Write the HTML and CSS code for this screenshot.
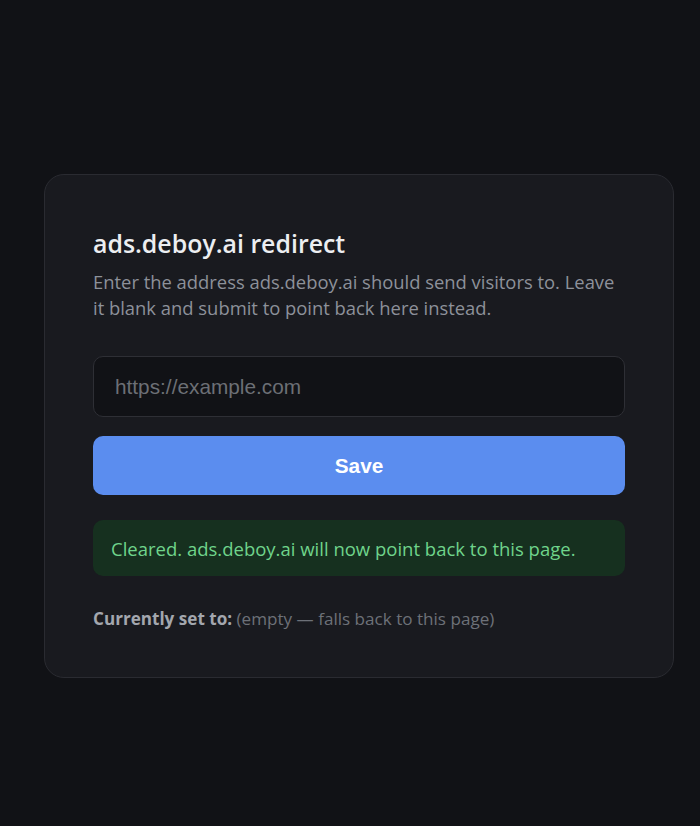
FILE: index.html
```html
<!DOCTYPE html>
<html lang="en">
<head>
<meta charset="utf-8">
<title>ads.deboy.ai redirect</title>
<link rel="stylesheet" href="styles.css">
</head>
<body>
<main class="page">
  <section class="card">
    <h1 class="title">ads.deboy.ai redirect</h1>
    <p class="desc">Enter the address ads.deboy.ai should send visitors to. Leave it blank and submit to point back here instead.</p>
    <form class="form">
      <input class="url" type="text" placeholder="https://example.com">
      <button class="save" type="button">Save</button>
    </form>
    <div class="notice">Cleared. ads.deboy.ai will now point back to this page.</div>
    <p class="current"><strong>Currently set to:</strong> <span class="muted">(empty — falls back to this page)</span></p>
  </section>
</main>
</body>
</html>
```

FILE: styles.css
```css
html, body {
  margin: 0;
  padding: 0;
  background: #111216;
  font-family: "Open Sans", "Noto Sans", "Liberation Sans", sans-serif;
}
.page {
  padding: 174px 26px 120px 44px;
}
.card {
  width: 630px;
  box-sizing: border-box;
  background: #191a1f;
  border: 1px solid #2a2b31;
  border-radius: 20px;
  padding: 52px 48px 46px 48px;
  display: flex;
  flex-direction: column;
}
.title {
  margin: 0;
  font-size: 24.9px;
  line-height: 32px;
  font-weight: 600;
  color: #eceef1;
}
.desc {
  margin: 10px 0 0;
  font-size: 18.4px;
  line-height: 26px;
  color: #8d919a;
}
.form {
  margin: 35px 0 0;
  display: flex;
  flex-direction: column;
  gap: 19px;
}
.url {
  height: 61px;
  box-sizing: border-box;
  background: #111216;
  border: 1px solid #2e2f35;
  border-radius: 10px;
  padding: 0 21px;
  font-family: "Liberation Sans", Arial, sans-serif;
  font-size: 20.8px;
  color: #e0e2e6;
  outline: none;
}
.url::placeholder {
  color: #6c6f75;
}
.save {
  height: 59px;
  border: none;
  border-radius: 10px;
  background: #5b8def;
  color: #ffffff;
  font-family: "Liberation Sans", Arial, sans-serif;
  font-weight: 700;
  font-size: 20.8px;
}
.notice {
  margin-top: 25px;
  height: 56px;
  box-sizing: border-box;
  padding: 0 18px;
  display: flex;
  align-items: center;
  background: #16301f;
  border-radius: 10px;
  color: #6fd48b;
  font-size: 18.5px;
}
.current {
  margin: 31px 0 0;
  font-size: 17.1px;
  line-height: 24px;
  color: #a3a7ae;
}
.current strong {
  font-weight: 700;
}
.muted {
  color: #6d7178;
}
```
